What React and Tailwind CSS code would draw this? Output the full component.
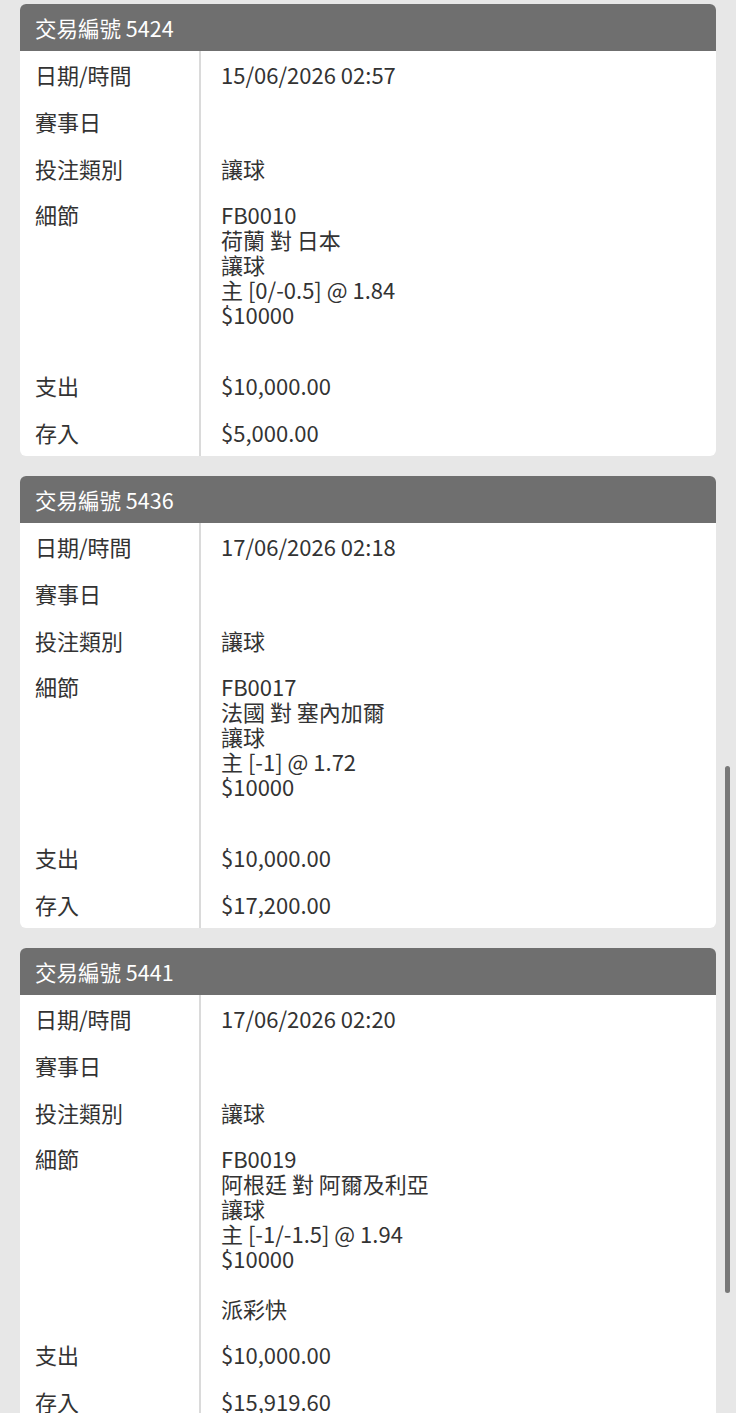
import React from 'react';

const txns = [
    {
        id: '5424',
        dateTime: '15/06/2026 02:57',
        betType: '讓球',
        details: ['FB0010', '荷蘭 對 日本', '讓球', '主 [0/-0.5] @ 1.84', '$10000', ''],
        out: '$10,000.00',
        inAmt: '$5,000.00',
    },
    {
        id: '5436',
        dateTime: '17/06/2026 02:18',
        betType: '讓球',
        details: ['FB0017', '法國 對 塞內加爾', '讓球', '主 [-1] @ 1.72', '$10000', ''],
        out: '$10,000.00',
        inAmt: '$17,200.00',
    },
    {
        id: '5441',
        dateTime: '17/06/2026 02:20',
        betType: '讓球',
        details: ['FB0019', '阿根廷 對 阿爾及利亞', '讓球', '主 [-1/-1.5] @ 1.94', '$10000', '', '派彩快'],
        out: '$10,000.00',
        inAmt: '$15,919.60',
    },
];

// one label/value line of a card
const Row = ({ label, children, tall }) => (
    <div className="flex">
        <div className={`w-[181px] shrink-0 border-r-2 border-[#dadada] pl-[15px] ${tall ? 'py-[10px]' : 'py-[11px]'}`}>
            {label}
        </div>
        <div className={`flex-1 pl-[20px] ${tall ? 'py-[10px]' : 'py-[11px]'}`}>
            {children}
        </div>
    </div>
);

const TxnCard = ({ t }) => (
    <div className="rounded-md overflow-hidden bg-white">
        <div className="h-[47px] bg-[#6f6f6f] text-white pl-[15px] flex items-center text-[21.5px]">
            交易編號 {t.id}
        </div>
        <Row label="日期/時間">{t.dateTime}</Row>
        <Row label="賽事日"><span>&nbsp;</span></Row>
        <Row label="投注類別">{t.betType}</Row>
        <Row label="細節" tall>
            {t.details.map((d, i) => (
                <div key={i} className="h-[25px]">{d}</div>
            ))}
        </Row>
        <Row label="支出">{t.out}</Row>
        <Row label="存入">{t.inAmt}</Row>
    </div>
);

export default function App() {
    return (
        <div
            className="relative h-[1413px] overflow-hidden bg-[#e7e7e7] px-5 pt-[4px] text-[22px] leading-[25px] text-[#333333]"
            style={{ fontFamily: '"Noto Sans CJK TC", "Noto Sans", sans-serif' }}
        >
            <div className="flex flex-col gap-5">
                {txns.map((t) => <TxnCard key={t.id} t={t} />)}
            </div>

            {/* scroll indicator */}
            <div className="absolute right-[6px] top-[766px] w-[5px] h-[527px] rounded-full bg-[#787878]" />
        </div>
    );
}
